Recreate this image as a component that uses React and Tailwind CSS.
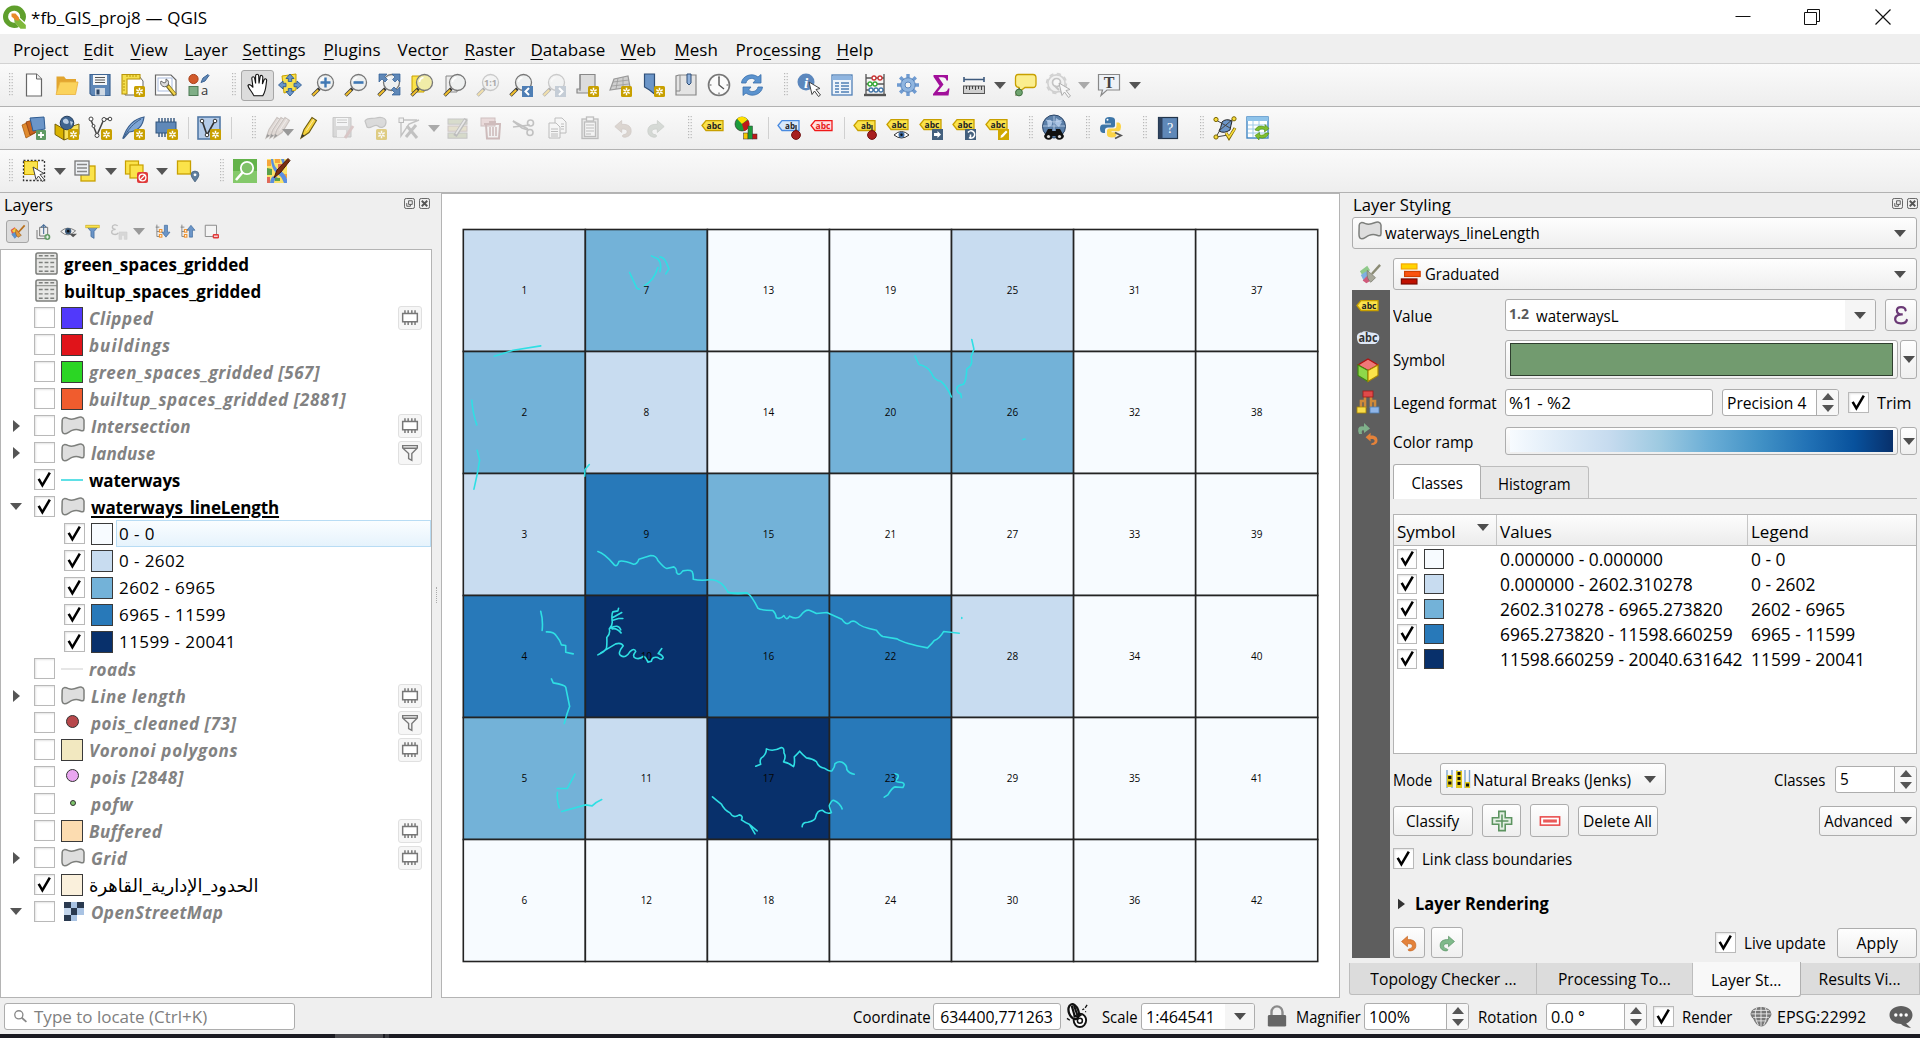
import React from "react";

const Star = ({ x = 13, y = 13 }) => (
  <g transform={`translate(${x} ${y})`}>
    <rect x="0" y="0" width="11" height="11" rx="1.5" fill="#c8a000" />
    <path d="M5.5 1.8V9.2M2.3 3.7L8.7 7.3M8.7 3.7L2.3 7.3" stroke="#fff" strokeWidth="1.5" />
    <circle cx="5.5" cy="5.5" r="1" fill="#c8a000" />
  </g>
);
const Glass = ({ fill = "#eef0f0", faded }) => (
  <g opacity={faded ? 0.35 : 1}>
    <path d="M8.5 15.5L1.5 22.5" stroke="#3a3a3a" strokeWidth="3.4" />
    <path d="M7.2 17L1.8 22.3" stroke="#f2c02c" strokeWidth="2" />
    <circle cx="14.5" cy="9.5" r="8" fill={fill} stroke="#777" strokeWidth="1.3" />
    <path d="M9.5 9a5 5 0 0 1 4-4.5" stroke="#fff" strokeWidth="1.6" fill="none" />
  </g>
);
const Tag = ({ fill = "#fbe34a", edge = "#c8a000", text = "abc", ink = "#222", y = 2 }) => (
  <g>
    <path d={`M1 ${y + 5.5}L5 ${y + 0.7}H22V${y + 10.5}H5Z`} fill={fill} stroke={edge} strokeWidth="1.3" />
    <text x="13" y={y + 8.6} fontSize="9" fontWeight="700" textAnchor="middle" fill={ink} fontFamily="Open Sans, sans-serif" textLength={text.length > 2 ? 15 : 10} lengthAdjust="spacingAndGlyphs">{text}</text>
  </g>
);
const Cursor = ({ x = 0, y = 0, o = 1 }) => (
  <path opacity={o} transform={`translate(${x} ${y})`} d="M0 0L11 6.5L7 7.5L11.5 13L9.5 14.5L5.5 9L3 12.5Z" fill="#fff" stroke="#444" strokeWidth="1" />
);
const Pencil = ({ x = 0, a = "#f4d13a", b = "#6b5b10" }) => (
  <g transform={`translate(${x} 0)`}>
    <path d="M4 22L7 13.5L15 1.5L19.5 4.5L12 16.5Z" fill={a} stroke={b} strokeWidth="1.1" />
    <path d="M4 22L5.3 18L7.5 19.6Z" fill="#333" />
    <path d="M9.5 14.5L17 3" stroke="#fff" strokeWidth="1" opacity=".6" />
  </g>
);
const Poly = () => (
  <path d="M1.2 6C1.6 3 4 3.2 7.5 4.6S13.5 5 16.5 3.8S22.6 2.8 23 6V14.5C23 17.5 21 17 19 16.2S15 14.6 11 16.4S5.5 20.4 3 19.6S1 16.5 1 13Z" fill="#dedede" stroke="#7d7f7c" strokeWidth="1.5" />
);
const UndoPath = "M1 10L9 3V7.5C17 7 21 10.5 20 17C19.5 20 17 22 13.5 22.5C9 23 9 20 12 19.5C15.5 19 16 16 15 14.5C14 13 12 13 9 13V17Z";

const ICONS = {
  new: <><path d="M4.5 1H14.5L19.5 6V23H4.5Z" fill="#fff" stroke="#666" strokeWidth="1.2" /><path d="M14.5 1V6H19.5" fill="#eee" stroke="#666" /></>,
  open: <><path d="M1.5 20V3.5H9L11 6H21V20Z" fill="#e2a52f" /><path d="M1 21.5L5 9H23L20.5 21.5Z" fill="#fbd35c" stroke="#eab13b" strokeWidth=".8" /></>,
  save: <><path d="M2 1.5H22V22.5H4L2 20.5Z" fill="#5f88b8" stroke="#3f6593" strokeWidth="1.2" /><rect x="5" y="2" width="14" height="10" fill="#f4f6f8" /><path d="M7 4.5H17M7 7H17M7 9.5H17" stroke="#555" /><rect x="7" y="15" width="10" height="7.5" fill="#cfd9e4" /><rect x="8.5" y="16.5" width="3" height="5" fill="#2f4868" /></>,
  layout: <><path d="M4 3H18L22 8V22H4Z" fill="#fff" stroke="#666" /><path d="M1 1.5H19V6H6V21H1Z" fill="#f5df4e" stroke="#b9960a" strokeWidth="1.1" /><path d="M6 2V4M9 2V4M12 2V4M15 2V4M2 8H4M2 11H4M2 14H4M2 17H4" stroke="#b9960a" /><Star /></>,
  layoutmgr: <><path d="M1.5 2H17L22 7V22H1.5Z" fill="#fff" stroke="#666" strokeWidth="1.2" /><rect x="4" y="5" width="14" height="13" fill="none" stroke="#a9bbdd" /><path d="M13 12L21 22" stroke="#6b5b10" strokeWidth="4" /><path d="M14 13L21 21.5" stroke="#f1d34b" strokeWidth="2.4" /><path d="M7 8a4 4 0 1 0 5-2v3l-2 1z" fill="#ddd" stroke="#666" /></>,
  style: <><circle cx="6.5" cy="6" r="4.6" fill="#d25a2b" stroke="#a8401a" /><rect x="2" y="13.5" width="9" height="9" fill="#7fae86" stroke="#4d7a55" /><path d="M14 9.5L16 5L21 1.5L22 2.5L18 8Z" fill="#5f88b8" stroke="#3f6593" /><text x="14" y="22" fontSize="13" fontFamily="Open Sans, sans-serif" fill="#333">a</text></>,
  hand: <path d="M7.5 22C5.5 18 1.5 14 2 12.3C3.2 10.8 5.5 12 7 14.5L5.8 5.2C6.2 3.2 8.2 3.4 8.6 5.2L9.6 10.5L9.6 2.8C9.9 .8 12.4 .8 12.7 2.8L13 10.5L14.2 3.4C14.7 1.8 16.9 2.2 16.8 4.2L16.4 11L18.2 6.5C19.2 5 21 6 20.6 7.8C19.8 12 20.4 17 16.8 22.8H8Z" fill="#fff" stroke="#111" strokeWidth="1.1" />,
  panto: <><path d="M4 3L18 1V17L6 20Z" fill="#f9e04a" stroke="#c8a000" /><path d="M12 1L16 5.5H13.7V8.5H10.3V5.5H8ZM23.5 12L19 16V13.7H16V10.3H19V8ZM12 23L8 18.5H10.3V15.5H13.7V18.5H16ZM.5 12L5 8V10.3H8V13.7H5V16Z" fill="#6b95c8" stroke="#2f5c92" strokeWidth=".9" /></>,
  zoomin: <><Glass /><path d="M14.5 4.5V14.5M9.5 9.5H19.5" stroke="#3f78b4" strokeWidth="2.4" /></>,
  zoomout: <><Glass /><path d="M9.5 9.5H19.5" stroke="#3f78b4" strokeWidth="2.6" /></>,
  zoomfull: <><Glass /><path d="M2 1H10L7.5 3.5L10.5 6.5L8 9L5 6L2 9ZM23 1V9L20.5 6.5L18 9L15.5 6.5L18 4L15 1ZM23 22H15L17.5 19.5L14.5 16.5L17 14L20 17L23 14Z" fill="#5f88b8" stroke="#2f5c92" strokeWidth=".7" /></>,
  zoomsel: <><path d="M2 3H14V19H2Z" fill="#fbe34a" stroke="#c8a000" /><Glass fill="#f1eca8" /></>,
  zoomlayer: <><path d="M3 3H14V19H3Z" fill="#eee" stroke="#888" /><Glass /></>,
  zoomnative: <><Glass faded /><text x="14.5" y="13" textAnchor="middle" fontSize="9" fontWeight="700" fill="#aaa" fontFamily="Open Sans, sans-serif">1:1</text></>,
  zoomlast: <><Glass /><rect x="13" y="13" width="11" height="11" fill="#4f7fb5" /><path d="M20 15L16.5 18.5L20 22" fill="none" stroke="#fff" strokeWidth="2" /></>,
  zoomnext: <><Glass faded /><rect x="13" y="13" width="11" height="11" fill="#c5cdd6" /><path d="M17 15L20.5 18.5L17 22" fill="none" stroke="#fff" strokeWidth="2" /></>,
  mapview: <><path d="M5 1.5H20V20H2V16H5Z" fill="#dcdcdc" stroke="#888" strokeWidth="1.2" /><path d="M5 1.5V18" stroke="#888" /><Star /></>,
  view3d: <><path d="M6 6L20 3L22 14L2 17Z" fill="#cfcfcf" stroke="#999" strokeWidth="1.2" /><path d="M10 5L8 16M15 4L15 15M5 9L21 7M4 13L21 11" stroke="#999" strokeWidth=".8" /><Star /></>,
  bookmark: <><path d="M3.5 1H13.5V21L8.5 17L3.5 14Z" fill="#6b95c8" stroke="#2f4f78" strokeWidth="1.2" /><Star /></>,
  bookmarks: <><path d="M5 2H22V19H22V22H2V3Z" fill="#e4e4e4" stroke="#888" strokeWidth="1.2" /><path d="M6 2V18H2" stroke="#888" fill="none" /><path d="M13 1H17V10L15 12L13 10Z" fill="#8fb1db" stroke="#2f4f78" /></>,
  clock: <><circle cx="12" cy="12" r="10.5" fill="#fbfbfb" stroke="#777" strokeWidth="1.6" /><path d="M12 4V12L17 16" fill="none" stroke="#555" strokeWidth="1.4" /><path d="M12 2.5V4.5M12 19.5V21.5M2.5 12H4.5M19.5 12H21.5" stroke="#555" /></>,
  refresh: <><path d="M1.5 10C2 3 12 -1 18 4L21 1.5V10H13L15.5 7C12 4 7 5.5 6 10Z" fill="#5b93cf" stroke="#3b70ab" strokeWidth=".8" /><path d="M22.5 14C22 21 12 25 6 20L3 22.5V14H11L8.5 17C12 20 17 18.5 18 14Z" fill="#5b93cf" stroke="#3b70ab" strokeWidth=".8" /></>,
  identify: <><circle cx="9" cy="9" r="8.5" fill="#5b87bd" /><text x="9" y="14.5" textAnchor="middle" fontSize="15" fontStyle="italic" fontWeight="700" fill="#fff" fontFamily="Liberation Serif, serif">i</text><Cursor x="12" y="9" /></>,
  table: <><rect x="2" y="2" width="20" height="20" fill="#eef4fb" stroke="#4f7fb5" strokeWidth="1.3" /><path d="M2 3H22V7H2Z" fill="#8fb5e0" /><path d="M5 10H9M11 10H19M5 13H9M11 13H19M5 16H9M11 16H19M5 19H9M11 19H19" stroke="#4f7fb5" strokeWidth="1.4" /></>,
  abacus: <><path d="M3 1V22M21 1V22M3 5H21M3 11H21M3 17H21" stroke="#555" strokeWidth="1.3" /><path d="M1 22H23" stroke="#555" strokeWidth="2.4" /><g fill="#fff" strokeWidth="1.3"><circle cx="11" cy="5" r="2" stroke="#c33" /><circle cx="17" cy="5" r="2" stroke="#c33" /><circle cx="7" cy="11" r="2" stroke="#3a3" /><circle cx="12" cy="11" r="2" stroke="#3a3" /><circle cx="8" cy="17" r="2" stroke="#47a" /><circle cx="13" cy="17" r="2" stroke="#47a" /><circle cx="18" cy="17" r="2" stroke="#47a" /></g></>,
  gear: <><g stroke="#6f9bd1" strokeWidth="3.4"><path d="M12 1V23M1 12H23M4.2 4.2L19.8 19.8M19.8 4.2L4.2 19.8" /></g><circle cx="12" cy="12" r="7.2" fill="#8fb5e0" stroke="#5b87bd" /><circle cx="12" cy="12" r="3" fill="#f2f2f2" stroke="#5b87bd" /></>,
  sigma: <path d="M4.5 2H19V7.5H17.5C17 5 16 4.3 13 4.3H9.5L14.5 11.5L8.5 19H14.5C17.5 19 18.5 17.5 19 15.5H20.5L19.5 22.5H4V21L10.5 12.8L4.5 3.8Z" fill="#a10f9a" />,
  measure: <><path d="M2 6.5H22M2 4V9M22 4V9" stroke="#3e5a7d" strokeWidth="1.6" /><rect x="1.5" y="13" width="21" height="7.5" fill="#cfcfcf" stroke="#555" /><path d="M4.5 13V16M7.5 13V17M10.5 13V16M13.5 13V17M16.5 13V16M19.5 13V17" stroke="#444" /></>,
  tips: <><path d="M5 1.5H20Q23 1.5 23 5V11Q23 14.5 20 14.5H12L6 19V14.5Q2.5 14 2.5 11V5Q2.5 1.5 5 1.5Z" fill="#fbee8e" stroke="#c8a000" strokeWidth="1.3" /><path d="M3 23V18L7 15" stroke="#6a6a3a" fill="none" /><circle cx="6" cy="19.5" r="3.4" fill="#6fa46f" stroke="#3f6f3f" /></>,
  action: <g opacity=".38"><circle cx="10.5" cy="10.5" r="8.6" fill="#ececec" stroke="#999" strokeWidth="1.6" /><circle cx="10.5" cy="10.5" r="9.8" fill="none" stroke="#999" strokeWidth="1.8" strokeDasharray="4.2 3.5" /><circle cx="10.5" cy="9.5" r="4" fill="#fff" stroke="#777" strokeWidth="1.7" /><path d="M9 13L13 17" stroke="#777" strokeWidth="2" /><Cursor x="13" y="10" /></g>,
  textann: <><path d="M1.5 1.5H22.5V17H10L4 22.5L5.5 17H1.5Z" fill="#eef2f7" stroke="#888" strokeWidth="1.2" /><text x="12" y="14.5" textAnchor="middle" fontSize="16" fontWeight="700" fill="#444" fontFamily="Liberation Serif, serif">T</text></>,
  addlayer: <><path d="M0 9L9 5L13 17L4 22Z" fill="#e08a2e" stroke="#a85c10" strokeWidth=".8" /><path d="M4 6L14 3L17 15L8 19Z" fill="#c9641c" stroke="#8a4010" strokeWidth=".8" /><path d="M8 2L22 1L23 13L11 15Z" fill="#6b95c8" stroke="#2f5c92" /><rect x="14" y="14" width="10" height="10" rx="1" fill="#5f9a63" /><path d="M19 16V22M16 19H22" stroke="#fff" strokeWidth="1.8" /></>,
  geopkg: <><path d="M0 8L9 13V24L0 18.5Z" fill="#d9b200" stroke="#6b5600" strokeWidth=".9" /><path d="M9 13L24 8V18.5L9 24Z" fill="#f7e15a" stroke="#6b5600" strokeWidth=".9" /><circle cx="12" cy="7" r="6.8" fill="#3f648f" stroke="#26405f" /><path d="M8 4Q11 1 13 4T12 8Q9 8 8 6ZM15 5L18 6L16 10Z" fill="#b9cde4" /><Star /></>,
  newshp: <><path d="M3 4L9 19L16 3H21" fill="none" stroke="#444" strokeWidth="1.5" /><g fill="#fff" stroke="#444"><circle cx="3" cy="3" r="2" /><circle cx="9" cy="19.5" r="2" /><circle cx="16" cy="3.5" r="2" /><circle cx="22" cy="3" r="1.8" /><circle cx="5.5" cy="10" r="1.5" /></g><Star /></>,
  feather: <><path d="M2 22C6 10 12 3 23 1C22 9 18 15 8 16L3 22Z" fill="#7fa6d6" stroke="#3b5f8c" strokeWidth="1.2" /><path d="M2 23C7 13 13 7 20 3" fill="none" stroke="#3b5f8c" /><Star /></>,
  memory: <><rect x="2" y="6" width="20" height="11" fill="#5f88b8" stroke="#31547d" /><path d="M5 2V6M8 2V6M11 2V6M14 2V6M17 2V6M20 2V6M5 17V21M8 17V21M11 17V21M14 17V21" stroke="#31547d" strokeWidth="1.4" /><Star /></>,
  virtual: <><rect x="1" y="1" width="22" height="22" fill="#b4cbe8" stroke="#5278a5" strokeWidth="1.6" /><path d="M5 4.5L10 19L18 4.5" fill="none" stroke="#333" strokeWidth="1.6" /><g fill="#fff" stroke="#333"><circle cx="5" cy="5" r="1.8" /><circle cx="10" cy="19" r="1.8" /><circle cx="18" cy="5" r="1.8" /></g><Star /></>,
  pencils: <g opacity=".45"><Pencil x={-4} a="#cbbcb4" b="#93857e" /><Pencil x={0} a="#cbbcb4" b="#93857e" /><Pencil x={4} a="#cbbcb4" b="#93857e" /></g>,
  pencil: <Pencil x={-1} />,
  saveedit: <g opacity=".35"><path d="M2 1.5H20V21H2Z" fill="#aaa" stroke="#777" /><rect x="5" y="2" width="12" height="8" fill="#f4f6f8" /><path d="M6 4H16M6 6.5H16" stroke="#777" /><rect x="6" y="14" width="9" height="7" fill="#eee" /><path d="M14 22L22 10" stroke="#a77" strokeWidth="3" /></g>,
  addpoly: <g opacity=".45"><path d="M1 5C3 1 8 3 12 2S22 1 22 6S17 13 14 10S6 14 3 11Z" fill="#bbb" stroke="#888" strokeWidth="1.2" /><Star x={12} y={13} /></g>,
  vertex: <g opacity=".45"><path d="M4 4V20L12 8L22 4M4 4H20" fill="none" stroke="#888" strokeWidth="1.4" /><rect x="2" y="2" width="4.5" height="4.5" fill="#eee" stroke="#777" /><path d="M9 21L19 9M10 10L20 22" stroke="#888" strokeWidth="3" /></g>,
  modify: <g opacity=".5"><rect x="2" y="3" width="19" height="5.2" fill="#bcc4a4" stroke="#999" /><rect x="2" y="10" width="19" height="5.2" fill="#d6cda8" stroke="#a99" /><rect x="2" y="17" width="19" height="5.2" fill="#bcc4a4" stroke="#999" /><path d="M9 20L20 3" stroke="#888" strokeWidth="4" /><path d="M10 18L19 4" stroke="#ddd" strokeWidth="1.6" /></g>,
  delete: <g opacity=".42"><rect x="2" y="2" width="14" height="8" fill="#d9b5b5" stroke="#977" /><path d="M5 8H22M7 9L8 22.5H20L21 9M10 6H17" fill="none" stroke="#9c7070" strokeWidth="2" /><path d="M11 11V20M14 11V20M17 11V20" stroke="#9c7070" strokeWidth="1.6" /></g>,
  cut: <g opacity=".4" fill="none" stroke="#777" strokeWidth="1.6"><path d="M1 5L16 13M1 11L18 9" /><circle cx="18.5" cy="7" r="3" /><circle cx="18" cy="16.5" r="3" /><path d="M1 5L10 12L16 14" /></g>,
  copy: <g opacity=".5" fill="#f7f7f7" stroke="#888"><path d="M10 2H17L21 6V17H10Z" /><path d="M4 7H11L15 11V22H4Z" /><path d="M6 13H13M6 15.5H13M6 18H13M6 20H13M16 8H19M16 10.5H19M16 13H19" /></g>,
  paste: <g opacity=".5" fill="#f4f4f4" stroke="#888" strokeWidth="1.3"><rect x="4" y="3" width="16" height="19.5" fill="#ddd" /><rect x="6.5" y="6" width="11" height="14.5" /><rect x="8.5" y="1" width="7" height="4" /><path d="M8 9H16M8 12H16M8 15H16M8 18H13" strokeWidth="1" /></g>,
  undo: <path opacity=".4" transform="translate(3 2) scale(.85)" d={UndoPath} fill="#b8a89c" stroke="#a09088" />,
  redo: <path opacity=".4" transform="translate(21 2) scale(-.85 .85)" d={UndoPath} fill="#a9b3a9" stroke="#909a90" />,
  abc: <Tag y={4} />,
  diagram: <><circle cx="8" cy="8" r="7" fill="#1c9b3c" stroke="#222" strokeWidth=".6" /><path d="M8 8L3 2.8A7 7 0 0 1 13.5 3.5Z" fill="#ffe000" /><path d="M8 8L14 4A7 7 0 0 1 10 15Z" fill="#c01818" /><rect x="9.5" y="17" width="4.5" height="6" fill="#f5c800" stroke="#333" strokeWidth=".5" /><rect x="14" y="10" width="4.5" height="13" fill="#1c9b3c" stroke="#333" strokeWidth=".5" /><rect x="18.5" y="18" width="4.5" height="5" fill="#c01818" stroke="#333" strokeWidth=".5" /></>,
  abpinblue: <><Tag y={4} fill="#d8e8fb" edge="#4a8be0" text="ab" /><path d="M19 9V18" stroke="#333" strokeWidth="1.4" /><circle cx="19" cy="19" r="4.4" fill="#a81f1f" stroke="#701010" /></>,
  abcred: <Tag y={4} fill="#ffe0e0" edge="#f01818" ink="#e81818" />,
  abpin: <><Tag y={4} text="ab" /><path d="M19 9V18" stroke="#333" strokeWidth="1.4" /><circle cx="19" cy="19" r="4.4" fill="#a81f1f" stroke="#701010" /></>,
  abceye: <><Tag y={3} /><path d="M8 19Q15.5 12 23 19Q15.5 25 8 19Z" fill="#fff" stroke="#333" /><circle cx="15.5" cy="18.8" r="3" fill="#3f6ea5" /><circle cx="15.5" cy="18.8" r="1.2" fill="#111" /></>,
  abcmove: <><Tag y={3} /><rect x="13" y="13" width="11" height="11" fill="#44607d" /><path d="M15 17H18.5V15L22 18.5L18.5 22V20H15Z" fill="#fff" /></>,
  abcrot: <><Tag y={3} /><rect x="13" y="13" width="11" height="11" fill="#44607d" /><path d="M16 16.5A3.6 3.6 0 1 1 17 21.5M18.5 18.5V22" fill="none" stroke="#fff" strokeWidth="1.6" /></>,
  abcedit: <><Tag y={3} /><rect x="13" y="13" width="11" height="11" fill="#d0a800" /><path d="M15.5 22L16 19.5L21 14.5L22.5 16L18 21Z" fill="#fff" /></>,
  metasearch: <><circle cx="12" cy="10.5" r="11.5" fill="#5b7fa8" stroke="#2c4668" /><path d="M5 5Q9 2 10 6T6 11ZM14 2L20 6L17 11L13 8Z" fill="#a9c3e3" /><path d="M1 10H23M12 0V20M4 4Q12 8 20 4" stroke="#c0d4ec" strokeWidth=".8" /><path d="M6 13H10V15H14V13H18L22 20Q21 24 17 23.8Q13.5 23.5 13.5 20H10.5Q10.5 23.5 7 23.8Q3 24 2 20Z" fill="#111" /><circle cx="6.5" cy="20.5" r="1.6" fill="#ddd" /><circle cx="17.5" cy="20.5" r="1.6" fill="#ddd" /></>,
  python: <><path d="M10.5 1Q5.5 1 6 5V7.5H12V8.5H4Q1 8.5 1 12.5T4 17H6V14Q6 11.5 9 11.5H14Q16 11.5 16 9.5V4Q16 1 10.5 1Z" fill="#3d76a8" /><path d="M13 21.5Q8 21.5 8 18.5V15Q8 12.5 10.5 12.5H15.5Q17.5 12.5 17.5 10V6.5H19.5Q22 7 22 11Q22 14 20 15.2H12.5V16.2H17.5V18.5Q17.5 21.5 13 21.5Z" fill="#fbd345" /><circle cx="8.5" cy="3.8" r="1" fill="#fff" /><path d="M16 16.5L22 19.5L16 22.5" fill="none" stroke="#555" strokeWidth="1.8" /></>,
  help: <><rect x="2.5" y="1.5" width="19" height="21" fill="#5f88b8" stroke="#22344a" strokeWidth="1.2" /><rect x="2.5" y="1.5" width="4" height="21" fill="#2f4360" /><text x="14" y="17" textAnchor="middle" fontSize="14" fill="#fff" fontFamily="Liberation Serif, serif">?</text></>,
  topo: <><path d="M9 6Q13 2 19 5Q18 9 17 14Q11 18 6 15Q8 12 9 6Z" fill="#6b95c8" stroke="#222" strokeWidth="1" /><path d="M3 4L17 12M20 3L7 14L3 21L15 19" stroke="#444" fill="none" /><g fill="#f8dc3c" stroke="#7a6500"><circle cx="3" cy="3.5" r="2.1" /><circle cx="21" cy="2.8" r="2.1" /><circle cx="3" cy="21" r="2.1" /></g><path d="M13 17L16 22L22 12" fill="none" stroke="#7a6500" strokeWidth="3" /><path d="M13 17L16 21.5L22 12.5" fill="none" stroke="#f8dc3c" strokeWidth="1.6" /></>,
  sheet: <><rect x="1" y="1" width="21" height="21" fill="#fff" stroke="#3f86c4" strokeWidth="1.4" /><rect x="1" y="1" width="21" height="4" fill="#8ec3ea" /><path d="M2 9H21M2 13H21M2 17H21M7 5V21M13 5V21" stroke="#9ecbe8" /><path d="M9 14Q12 8 19 11V8.5L23 12.5L18.5 16V13.5Q14 12 12.5 15ZM23 17Q20 24 13 21.5V24L9 19.5L13.5 16.5V18.8Q18 20 19.5 17Z" fill="#7fbf2f" stroke="#4a8a10" strokeWidth=".6" /></>,
  select: <><rect x="1.5" y="1.5" width="21" height="20" fill="none" stroke="#333" strokeWidth="1.3" strokeDasharray="2 1.6" /><rect x="2.5" y="2.5" width="13" height="13" fill="#fbe34a" stroke="#c8a000" /><Cursor x="11" y="8" /></>,
  form: <><rect x="8" y="7" width="14" height="15" fill="#fbe34a" stroke="#c8a000" strokeWidth="1.3" /><rect x="2" y="2" width="14" height="14" fill="#eef1f5" stroke="#777" strokeWidth="1.3" /><path d="M4 5.5H14M4 9H14M4 12.5H14" stroke="#888" strokeWidth="1.6" /></>,
  deselect: <><rect x="1.5" y="2" width="13" height="13" fill="#fbe34a" stroke="#c8a000" strokeWidth="1.2" /><rect x="6" y="6" width="13" height="13" fill="#fbe34a" stroke="#c8a000" strokeWidth="1.2" /><rect x="13" y="13" width="11" height="11" rx="2" fill="#e03a3a" /><circle cx="18.5" cy="18.5" r="3.4" fill="none" stroke="#fff" strokeWidth="1.3" /><path d="M16 21L21 16" stroke="#fff" strokeWidth="1.2" /></>,
  selloc: <><rect x="2.5" y="2" width="13" height="13" fill="#fbe34a" stroke="#c8a000" strokeWidth="1.3" /><path d="M20 23Q16 18 16 16A4 4 0 0 1 24 16Q24 18 20 23Z" fill="#5f7f9f" stroke="#3c566f" strokeWidth=".6" /><circle cx="20" cy="15.8" r="1.4" fill="#fff" /></>,
  green: <><rect x="0" y="0" width="24" height="24" fill="#63b34a" /><rect x="0" y="12" width="24" height="12" fill="#84c96a" /><circle cx="14" cy="9" r="6.2" fill="#7fc168" stroke="#fff" strokeWidth="1.8" /><path d="M9.5 13.5L3 21" stroke="#fff" strokeWidth="2.6" /></>,
  osm: <><rect x="1" y="0" width="20" height="24" fill="#fbe36a" /><path d="M1 1H5V7H1ZM9 0H14V4H9ZM16 15H21V19H16Z" fill="#f6a53a" /><path d="M7 0Q8 9 13 11T21 20V24H18Q15 16 10 14Q5 8 5 0ZM4 24Q5 16 9 17L12 19Q8 20 8 24ZM15 0H18L20 8L17 6Z" fill="#5b8fe0" /><path d="M1 9L6 10V16H1ZM9 19H14V22H9Z" fill="#5aa04a" /><path d="M1 18H4V24H1ZM12 5H16V9H12Z" fill="#e06a5a" /><path d="M22 -.5L24 1.5L15 13L8 19L11 11Z" fill="#7a2f10" stroke="#4a1a05" strokeWidth="1" /></>,
  brush: <><path d="M1 9L7 5L14 12L8 21Q5 17 4 18Z" fill="#e05a4a" /><path d="M3 10L8 6L12 11L6 13Z" fill="#f0d040" /><path d="M2 15L8 12L12 17L7 22Z" fill="#5b93cf" /><path d="M9 8L17 17L12 20Q7 16 9 8Z" fill="#e4993a" stroke="#8a4f10" strokeWidth=".8" /><path d="M13 12L22 2" stroke="#b8701c" strokeWidth="2.6" /></>,
  brush2: <><path d="M1 9L9 3L12 8L4 14Z" fill="#8fc98a" /><path d="M2 13L8 9L11 14L5 19Z" fill="#7fb0e0" /><path d="M4 19L9 14L13 19L8 22Z" fill="#d05a7a" /><path d="M9 8L18 16L13 21Q8 18 9 8Z" fill="#a8a89a" stroke="#77776a" strokeWidth=".8" /><path d="M14 12L23 2" stroke="#8b8b74" strokeWidth="2.6" /></>,
  addgroup: <><path d="M3 9V22H15M7 5V18H19V5Z" fill="none" stroke="#777" strokeWidth="1.5" /><path d="M13 1V15M9 5L13 1L17 5" stroke="#456c98" fill="none" strokeWidth="1.6" /><circle cx="18.5" cy="19.5" r="4.5" fill="#5f9a63" /><path d="M18.5 17V22M16 19.5H21" stroke="#fff" strokeWidth="1.4" /></>,
  eye: <><path d="M1 12Q10 3 22 11Q11 22 1 12Z" fill="#eee" stroke="#777" strokeWidth="1.3" /><circle cx="11.5" cy="11.5" r="4.4" fill="#3a5878" /><circle cx="11.5" cy="11.5" r="1.8" fill="#111" /><path d="M13 15H24L18.5 20Z" fill="#555" /></>,
  filter: <><path d="M2 3H22L14.5 12V23L9.5 20V12Z" fill="#6b95c8" stroke="#3b6597" strokeWidth="1.1" /><path d="M1 2H23V6H1Z" fill="#fbe34a" stroke="#c8a000" strokeWidth=".8" /></>,
  epsfilter: <g opacity=".45"><path d="M10 3C8 0 2 1 2 4.5C2 7 5 8 7 8C4 8 1 9.5 1 12.5C1 16 8 17 11 13.5" fill="none" stroke="#888" strokeWidth="2" /><path d="M12 12H24V23H20V17H16V23H12Z" fill="#bbb" stroke="#aaa" /></g>,
  expand: <><path d="M3 1V20H8M1 5H7M3 12H8" fill="none" stroke="#777" strokeWidth="1.3" /><g fill="#fff" stroke="#f08a1c" strokeWidth="1.6"><rect x="7" y="9" width="4" height="4" /><rect x="7" y="17" width="4" height="4" /></g><path d="M15 2H20V13H24L17.5 21L11 13H15Z" fill="#6b95c8" stroke="#2f5c92" strokeWidth=".9" /></>,
  collapse: <><path d="M3 1V20H8M1 5H7M3 12H8" fill="none" stroke="#777" strokeWidth="1.3" /><g fill="#fff" stroke="#f08a1c" strokeWidth="1.6"><rect x="7" y="9" width="4" height="4" /><rect x="7" y="17" width="4" height="4" /></g><path d="M15 21H20V10H24L17.5 2L11 10H15Z" fill="#6b95c8" stroke="#2f5c92" strokeWidth=".9" /></>,
  remove: <><path d="M2 2H20V20H2Z" fill="#f4f4f4" stroke="#888" strokeWidth="1.5" /><rect x="14" y="16" width="10" height="7" rx="2" fill="#e03a3a" /><path d="M16 19.5H22" stroke="#fff" strokeWidth="1.8" /></>,
  poly: <Poly />,
  tableg: <><rect x="1" y="1" width="22" height="22" rx="2" fill="#e8e8e6" stroke="#7d7f7c" strokeWidth="1.6" /><path d="M1 7H23" stroke="#7d7f7c" /><path d="M4 4H8M10 4H14M16 4H20M4 11H8M10 11H14M16 11H20M4 15.5H8M10 15.5H14M16 15.5H20M4 20H8M10 20H14M16 20H20" stroke="#7d7f7c" strokeWidth="1.5" /></>,
  graduated: <><rect x="1.5" y="1" width="17" height="5.5" fill="#ffd400" stroke="#f5a800" strokeWidth="1.3" /><rect x="5" y="9.2" width="17" height="5.5" fill="#fb5310" stroke="#d04000" strokeWidth="1.3" /><rect x="1.5" y="17.4" width="17" height="5.5" fill="#c01000" stroke="#7a0a00" strokeWidth="1.3" /></>,
  cloud: <><path d="M1 12C.5 8 3 6.5 6 6.5Q7 4.5 11 5.5T19 7Q23.5 8 23.3 12T19 18H5Q1 17.5 1 12Z" fill="#dfe8f6" /><text x="12" y="15.6" fontSize="12" fontWeight="700" textAnchor="middle" fill="#333" textLength="19" lengthAdjust="spacingAndGlyphs" fontFamily="Open Sans, sans-serif">abc</text></>,
  cube: <><path d="M12 1L22 7L12 12.5L2 7Z" fill="#f07878" stroke="#b01010" strokeWidth="1.2" /><path d="M2 7L12 12.5V23.5L2 17.5Z" fill="#8ed84a" stroke="#3f8a10" strokeWidth="1.2" /><path d="M22 7L12 12.5V23.5L22 17.5Z" fill="#fbe34a" stroke="#a88600" strokeWidth="1.2" /></>,
  tree: <><path d="M5 20V11H9M19 20V11H15M9 5V18M15 5V18" stroke="#d08a3a" strokeWidth="2.6" fill="none" /><rect x="7" y="1" width="10" height="6" fill="#e04a4a" stroke="#a01818" strokeWidth=".8" /><rect x="1" y="17" width="9" height="6" fill="#f8dc4a" stroke="#a88600" strokeWidth=".8" /><rect x="14" y="17" width="9" height="6" fill="#8fb5e8" stroke="#4f7fb5" strokeWidth=".8" /></>,
  history: <><path d="M3 12Q0 3 8 4.5V1L14 6.5L8 11V8.5Q5 7 6 12Z" fill="#7fb08a" /><path transform="translate(9 9) scale(.62)" d={UndoPath} fill="#e4823a" /></>,
  undoO: <path transform="translate(1 0)" d={UndoPath} fill="#e4823a" stroke="#c0601c" strokeWidth=".8" />,
  redoG: <path transform="translate(23 0) scale(-1 1)" d={UndoPath} fill="#7fb98a" stroke="#4f8a5a" strokeWidth=".8" />,
  plus: <path d="M8.5 1.5H15.5V8.5H22.5V15.5H15.5V22.5H8.5V15.5H1.5V8.5H8.5ZM12 5V19M5 12H19" fill="#e4efe4" stroke="#5c9460" strokeWidth="1.7" />,
  minus: <><rect x="1.5" y="7.5" width="21" height="9" fill="#fff" stroke="#e84a4a" strokeWidth="1.7" /><path d="M4.5 12H19.5" stroke="#ea5a5a" strokeWidth="3.4" /></>,
  jenks: <><path d="M1 3V21M6 3V21M11 3V21M15 3V21M19 3V21M23.5 3V21" stroke="#7fa6cf" strokeWidth="1.4" /><path d="M1 8H6.5V20H1ZM10 4H16V21H10ZM19 15H24V21H19Z" fill="#e0c818" /><path d="M2.2 9H5.4V12H2.2ZM2.2 14.5H5.4V17.5H2.2ZM11.5 5H14.5V8H11.5ZM11.5 10H14.5V13H11.5ZM11.5 15H14.5V18H11.5ZM20 16.5H23V19.5H20Z" fill="#111" /></>,
  chip: <path d="M4 7H20V16H4ZM6.5 3.5V7M10 3.5V7M14 3.5V7M17.5 3.5V7M6.5 16V19.5M10 16V19.5M14 16V19.5M17.5 16V19.5" fill="#fff" stroke="#777" strokeWidth="1.6" />,
  funnel: <path d="M4 4H20V6.5L14 12.5V20L10.5 18V12.5L4 6.5ZM4 6.8H20" fill="#f4f4f4" stroke="#777" strokeWidth="1.5" />,
  mouse: <><ellipse cx="14.5" cy="17" rx="6.5" ry="7" fill="#fff" stroke="#111" strokeWidth="2" /><ellipse cx="8" cy="8" rx="5" ry="8" transform="rotate(-20 8 8)" fill="#fff" stroke="#111" strokeWidth="2.4" /><path d="M6 2L9.5 14M8.5 2L12 12" stroke="#111" strokeWidth="2.2" /><path d="M8 12Q13 14 16 11" stroke="#111" strokeWidth="2.2" /><circle cx="14.5" cy="17.5" r="2.6" fill="#fff" stroke="#111" strokeWidth="1.6" /><path d="M1 15L4 17M17 6L19 5M20 4L22 1M20 8L21 8" stroke="#111" strokeWidth="1.4" /></>,
  lock: <><path d="M6 11V7.5A6 6 0 0 1 18 7.5V11" fill="none" stroke="#8a8a8a" strokeWidth="2.6" /><rect x="2" y="11" width="20" height="12.5" rx="1.5" fill="#666" /></>,
  globe: <><path d="M5 6Q12 -4 19 6Z" fill="#666" /><ellipse cx="12" cy="9" rx="12" ry="8" fill="#777" /><path d="M2 12Q6 23 12 23.5T22 12Z" fill="#777" /><path d="M1 9H23M3 5H21M3 13H21M6 17H18M12 1V23M7 2Q3 11 9 22M17 2Q21 11 15 22" stroke="#eee" strokeWidth="1" fill="none" /></>,
  chat: <><path d="M12 2C18 2 23.5 5.5 23.5 11S18 19.5 17 19.5L22 24Q15 23 12 20C6 20 .5 16.5 .5 11S6 2 12 2Z" fill="#5e5e5e" /><circle cx="6.8" cy="11" r="1.7" fill="#fff" /><circle cx="12" cy="11" r="1.7" fill="#fff" /><circle cx="17.2" cy="11" r="1.7" fill="#fff" /></>,
  search: <><circle cx="10" cy="10" r="7" fill="none" stroke="#888" strokeWidth="2.2" /><path d="M15 15L23 22" stroke="#888" strokeWidth="3" /></>,
  epsilon: <path d="M17.5 6.5C17 1.5 7.5 1 7 6.5C6.8 10.5 11 11.5 14 11.2C10 11 5 12.5 5 17C5.2 23.5 18 23.5 19 18" fill="none" stroke="#6b3a76" strokeWidth="2.7" strokeLinecap="round" />,
};

const Icon = ({ n, s = "size-6" }) => (
  <svg viewBox="0 0 24 24" className={`${s} shrink-0 overflow-visible`} fill="none">{ICONS[n]}</svg>
);

const Down = ({ c = "text-[#4e4e4e]" }) => (
  <svg viewBox="0 0 12 7" className={`h-[7px] w-3 shrink-0 ${c}`}><path d="M0 0H12L6 7Z" fill="currentColor" /></svg>
);

/* Condensed label: left-anchored by default, centred with `mid`, right-anchored with `end`. */
const N = ({ children, mid, end, k = "scale-x-90", c = "" }) => (
  <span className={`inline-block whitespace-nowrap ${mid ? "origin-center" : end ? "origin-right" : "origin-left"} ${k} ${c}`}>{children}</span>
);

const Grip = () => (
  <svg viewBox="0 0 4 24" className="h-6 w-1 shrink-0" fill="#b8b8b8">
    {Array.from({ length: 8 }, (_, i) => (
      <g key={i}><rect x="0" y={i * 3} width="1.2" height="1.2" /><rect x="2.6" y={i * 3} width="1.2" height="1.2" /></g>
    ))}
  </svg>
);

const SLOT = { h: "w-6", H: "w-[25px]", s0: "w-[18px]", J: "w-[25px]" };

function Toolbar({ items }) {
  return (
    <div className="box-content flex h-[42px] shrink-0 items-center border-b border-[#b2b2b2] bg-linear-to-b from-[#fafafa] to-[#eeeeee] pb-0">
      {items.split(" ").map((it, i) => {
        if (SLOT[it]) return <div key={i} className={`flex shrink-0 justify-end pr-[5px] ${SLOT[it]}`}><Grip /></div>;
        if (it === "|") return <div key={i} className="flex w-2.5 shrink-0 justify-center"><div className="h-[22px] w-px bg-[#d0d0d0]" /></div>;
        if (it === "v" || it === "vg" || it === "v16") return <div key={i} className={`flex shrink-0 justify-center ${it === "v16" ? "w-4" : "w-[18px]"}`}><Down c={it === "v" ? "text-[#555]" : "text-[#aaa]"} /></div>;
        if (it === "hand") return <div key={i} className="flex h-[31px] w-[33px] shrink-0 items-center justify-center rounded-[3px] border border-[#a6a6a6] bg-[#dcdcdc]"><Icon n="hand" /></div>;
        if (it === "pencils") return <div key={i} className="relative flex w-[33px] shrink-0 justify-center"><Icon n="pencils" /><div className="absolute right-0 bottom-1"><Down c="text-[#999]" /></div></div>;
        return <div key={i} className="flex w-[33px] shrink-0 justify-center pr-px"><Icon n={it} /></div>;
      })}
    </div>
  );
}

const MENU = [
  ["Pro", "j", "ect", "w-[70.5px]"], ["", "E", "dit", "w-[47px]"], ["", "V", "iew", "w-[54px]"], ["", "L", "ayer", "w-[58px]"],
  ["", "S", "ettings", "w-[81px]"], ["", "P", "lugins", "w-[74px]"], ["Vect", "o", "r", "w-[67px]"], ["", "R", "aster", "w-[66px]"],
  ["", "D", "atabase", "w-[90px]"], ["", "W", "eb", "w-[54px]"], ["", "M", "esh", "w-[61px]"], ["Pro", "c", "essing", "w-[101px]"], ["", "H", "elp", "w-[60px]"],
];

const Box = ({ on, small }) => (
  <div className={`flex shrink-0 items-center justify-center border border-[#b9b9b9] bg-white shadow-[inset_1px_1px_2px_#e4e4e4] ${small ? "size-[20px]" : "size-[21px]"}`}>
    {on && <svg viewBox="0 0 16 16" className="size-[17px]"><path d="M2.5 7.5L6 13.5L13 1.5" fill="none" stroke="#000" strokeWidth="2.4" /></svg>}
  </div>
);

const Swatch = ({ c, s = "size-[22px]" }) => <div className={`shrink-0 border border-[#3a3a3a] ${c} ${s}`} />;

const LAYERS = [
  { t: "green_spaces_gridded", k: "table", tr: "tracking-[.05px]" },
  { t: "builtup_spaces_gridded", k: "table" },
  { t: "Clipped", sw: "bg-[#5139fb]", ind: "chip", tr: "tracking-[.6px]" },
  { t: "buildings", sw: "bg-[#e0141a]", tr: "tracking-[1px]" },
  { t: "green_spaces_gridded [567]", sw: "bg-[#2bd624]", tr: "tracking-[.5px]" },
  { t: "builtup_spaces_gridded [2881]", sw: "bg-[#f05c2e]", tr: "tracking-[.6px]" },
  { t: "Intersection", k: "poly", ex: "r", ind: "chip", tr: "tracking-[.2px]" },
  { t: "landuse", k: "poly", ex: "r", ind: "funnel", tr: "tracking-[.15px]" },
  { t: "waterways", k: "line", line: "bg-[#5fe0e6]", on: 1, tr: "tracking-[-.2px]" },
  { t: "waterways_lineLength", k: "poly", ex: "d", on: 1, u: 1, tr: "tracking-[-.12px]" },
  { t: "0 - 0", sw: "bg-[#f7fbff]", child: 1, hi: 1 },
  { t: "0 - 2602", sw: "bg-[#c8dcf0]", child: 1 },
  { t: "2602 - 6965", sw: "bg-[#73b2d8]", child: 1 },
  { t: "6965 - 11599", sw: "bg-[#2879b9]", child: 1 },
  { t: "11599 - 20041", sw: "bg-[#08306b]", child: 1 },
  { t: "roads", k: "line", line: "bg-[#e6e6e6]", tr: "tracking-[.4px]" },
  { t: "Line length", k: "poly", ex: "r", ind: "chip", tr: "tracking-[.55px]" },
  { t: "pois_cleaned [73]", k: "dot", dot: "size-[13px] bg-[#b7484b]", ind: "funnel", tr: "tracking-[.5px]" },
  { t: "Voronoi polygons", sw: "bg-[#f2e8c0]", ind: "chip", tr: "tracking-[.7px]" },
  { t: "pois [2848]", k: "dot", dot: "size-[13px] bg-[#e9a6f0]", tr: "tracking-[.6px]" },
  { t: "pofw", k: "dot", dot: "size-[6px] bg-[#7fc46c]", tr: "tracking-[.6px]" },
  { t: "Buffered", sw: "bg-[#fcdcb0]", ind: "chip", tr: "tracking-[.45px]" },
  { t: "Grid", k: "poly", ex: "r", ind: "chip", tr: "tracking-[.6px]" },
  { t: "الحدود_الإدارية_القاهرة", sw: "bg-[#faf0dc]", on: 1, ar: 1 },
  { t: "OpenStreetMap", k: "osm", ex: "d", tr: "tracking-[.45px]" },
];

function LayerRow({ r }) {
  const active = r.on || r.k === "table";
  if (r.child)
    return (
      <div className="flex h-[27px] items-center pl-[63px]">
        <Box on />
        <Swatch c={`ml-1.5 ${r.sw}`} />
        <div className={`ml-[3px] flex h-[27px] flex-1 items-center border pl-0.5 tracking-[.42px] ${r.hi ? "border-[#b8dcf4] bg-linear-to-b from-[#fafdff] to-[#e6f3fc]" : "border-transparent"}`}><span className="pt-px">{r.t}</span></div>
      </div>
    );
  return (
    <div className="flex h-[27px] items-center">
      <div className="flex w-[33px] shrink-0 items-center pl-[9px]">
        {r.ex === "r" && <svg viewBox="0 0 7 12" className="ml-[3px] h-3 w-[7px]"><path d="M0 0L7 6L0 12Z" fill="#555" /></svg>}
        {r.ex === "d" && <Down c="text-[#555]" />}
      </div>
      {r.k === "table" ? (
        <div className="flex w-[30px] pl-px"><Icon n="tableg" s="size-[23px]" /></div>
      ) : (
        <>
          <Box on={r.on} />
          <div className="ml-1.5 flex h-6 w-[28px] shrink-0 items-center">
            {r.sw && <Swatch c={r.sw} />}
            {r.k === "poly" && <Icon n="poly" />}
            {r.k === "line" && <div className={`h-0.5 w-[22px] ${r.line}`} />}
            {r.k === "dot" && <div className="flex w-[23px] justify-center pb-0.5"><div className={`rounded-full border border-[#333] ${r.dot}`} /></div>}
            {r.k === "osm" && (
              <div className="ml-[3px] grid size-[20px] grid-cols-3 grid-rows-3">
                {["bg-[#2a3a50]", "bg-[#a9c3e3]", "bg-[#2a3a50]", "bg-[#c4d6ec]", "bg-[#2a3a50]", "bg-[#a9c3e3]", "bg-[#2a3a50]", "bg-[#a9c3e3]", "bg-white"].map((c, i) => <div key={i} className={c} />)}
              </div>
            )}
          </div>
        </>
      )}
      <div className={`min-w-0 flex-1 truncate pt-0.5 leading-[27px] ${r.tr || ""} ${active ? "text-black" : "text-[#828282] italic"} ${r.u ? "underline decoration-2 underline-offset-2" : ""} ${r.k === "poly" || r.k === "dot" || r.k === "osm" ? "pl-0.5" : ""} ${r.ar ? "text-[18px]" : "font-bold"}`}>{r.t}</div>
      {r.ind && <div className="mr-[9px] flex size-6 shrink-0 items-center justify-center rounded-[3px] border border-[#e0e0e0] bg-[#f6f6f6]"><Icon n={r.ind} s="size-[22px]" /></div>}
    </div>
  );
}

const DockButtons = () => (
  <div className="flex gap-1 pb-[3px]">
    <svg viewBox="0 0 12 12" className="size-[11px]" fill="none" stroke="#555"><rect x=".5" y=".5" width="11" height="11" rx="2" /><path d="M5 3H9V7H5ZM3 5.5V9H7V7" /></svg>
    <svg viewBox="0 0 12 12" className="size-[11px]" fill="none" stroke="#555"><rect x=".5" y=".5" width="11" height="11" rx="2" /><path d="M3 3L9 9M9 3L3 9" strokeWidth="2" /></svg>
  </div>
);

function LayersPanel() {
  return (
    <section className="flex w-[432px] shrink-0 flex-col">
      <div className="flex h-[25px] shrink-0 items-center justify-between pr-[2px] pl-1"><N k="scale-x-95">Layers</N><DockButtons /></div>
      <div className="flex h-[32px] shrink-0 items-center pb-[3px]">
        <div className="ml-1.5 flex size-[23px] items-center justify-center rounded-[3px] border border-[#a6a6a6] bg-[#dcdcdc]"><Icon n="brush" s="size-4" /></div>
        <div className="ml-[6px]"><Icon n="addgroup" s="size-4" /></div>
        <div className="ml-[9px]"><Icon n="eye" s="size-[17px]" /></div>
        <div className="ml-2"><Icon n="filter" s="size-[15px]" /></div>
        <div className="ml-[11px]"><Icon n="epsfilter" s="size-4" /></div>
        <div className="ml-1.5"><Down c="text-[#999]" /></div>
        <div className="ml-2.5"><Icon n="expand" s="size-[15px]" /></div>
        <div className="ml-2.5"><Icon n="collapse" s="size-[15px]" /></div>
        <div className="ml-[9px]"><Icon n="remove" s="size-[15px]" /></div>
      </div>
      <div className="flex-1 border border-[#b4b4b4] bg-white">{LAYERS.map((r, i) => <LayerRow key={i} r={r} />)}</div>
    </section>
  );
}

const FILLS = ["#f7fbff", "#c8dcf0", "#73b2d8", "#2879b9", "#08306b"];
const GRID = [
  [1, 2, 0, 0, 1, 0, 0],
  [2, 1, 0, 2, 2, 0, 0],
  [1, 3, 2, 0, 0, 0, 0],
  [3, 4, 3, 3, 1, 0, 0],
  [2, 1, 4, 3, 0, 0, 0],
  [0, 0, 0, 0, 0, 0, 0],
];
const RIVERS_N = "M592 137L610 146Q622 160 616 184M616 140Q628 142 634 158L641 176L632 191M610 172Q600 210 572 227M531 187L551 234L558 237M152 438L205 420L282 407M89 570Q92 610 103 644M104 720L111 750L104 793L95 837M418 763L406 778L405 798M1330 437L1341 463Q1365 468 1375 487Q1385 512 1402 513Q1420 530 1432 560M1489 388L1495 417L1487 440Q1494 465 1475 476Q1474 510 1466 522Q1446 526 1447 537Q1450 550 1458 550L1460 562M442 1024Q460 1029 488 1064Q496 1072 501 1054Q510 1049 542 1062Q552 1062 557 1047L590 1036Q606 1036 610 1051Q628 1074 635 1075L655 1070Q664 1076 662 1086Q668 1100 680 1082Q700 1078 706 1084Q710 1092 709 1107Q730 1113 760 1108Q790 1112 806 1145Q820 1152 860 1148";
const RIVERS_S = "M806 36Q820 42 860 38Q874 48 890 84Q896 90 932 91Q940 98 942 113Q954 118 963 106Q970 124 979 108Q1000 120 1010 106Q1022 88 1034 90Q1044 94 1054 100L1083 97L1125 117Q1136 136 1146 128Q1156 118 1168 128Q1176 140 1222 150Q1232 165 1240 169L1280 176Q1300 190 1365 203Q1378 190 1384 181Q1398 176 1410 154L1454 159M282 93Q289 120 286 151M298 155Q318 154 325 166Q336 180 340 194L352 196V216L373 221M312 296L317 308Q350 314 352 321L363 379L356 400L348 430M378 582L356 625L328 625M329 636Q326 660 334 683M341 694L408 674L426 677Q436 666 453 658M442 224Q460 215 466 205Q468 190 467 172Q478 160 474 146Q484 136 482 122Q480 100 484 95L498 92L500 84M484 112L509 97M484 120L500 115H512M476 144Q500 130 506 149M482 146Q494 142 507 158M450 218L492 191Q508 186 513 197Q496 220 506 226Q520 236 532 214Q545 202 548 214Q536 230 548 234Q560 238 570 228Q580 234 582 246L592 243Q594 228 610 232Q622 242 625 232Q622 224 611 220L621 205M884 558L898 552Q894 540 900 533Q914 524 914 506Q932 516 956 502Q964 502 963 518Q970 530 962 545Q976 548 990 559Q994 550 992 530Q1002 520 1007 513Q1014 522 1026 533Q1044 536 1054 544Q1060 562 1076 564Q1092 576 1098 571Q1106 560 1106 550Q1116 542 1126 546Q1140 554 1139 568Q1146 580 1160 582M763 650Q776 662 788 672Q796 690 812 698Q822 716 838 704Q850 706 844 719Q856 728 866 732L882 761M868 734L888 752M1014 740Q1014 726 1030 726Q1052 722 1052 710Q1056 690 1070 690Q1084 704 1096 697Q1090 682 1090 676Q1096 660 1102 660Q1120 668 1126 686M1244 651L1254 644Q1266 622 1274 620L1296 622Q1304 610 1294 607Q1276 606 1276 600Q1286 592 1282 584L1274 581M1461 112V115";

function MapCanvas() {
  const X = 21.3, Y = 34.5, W = 122.06, H = 122;
  return (
    <div className="mt-px w-[899px] shrink-0 border border-[#b4b4b4] bg-white">
      <svg viewBox="0 -1 897 803" className="h-[803px] w-[897px]" fill="none">
        {GRID.map((row, j) => row.map((v, i) => (
          <rect key={`${i}-${j}`} x={X + i * W} y={Y + j * H} width={W} height={H} fill={FILLS[v]} stroke="#232323" strokeWidth="1.6" />
        )))}
        <g stroke="#2fdfe4" strokeWidth="1.6" strokeLinejoin="round" strokeLinecap="round">
          <path transform="translate(-2 15.2) scale(.35714 .33333)" vectorEffect="non-scaling-stroke" d={RIVERS_N} />
          <path transform="translate(-2 385.2) scale(.35714 .33333)" vectorEffect="non-scaling-stroke" d={RIVERS_S} />
          <path d="M581 244.5L583 244" />
        </g>
        <g fontFamily="Open Sans, sans-serif" fontSize="10" textAnchor="middle" fill="#050505">
          {GRID.map((row, j) => row.map((_, i) => (
            <text key={`${i}-${j}`} x={X + (i + 0.5) * W} y={Y + (j + 0.5) * H + 3.3}>{i * 6 + j + 1}</text>
          )))}
        </g>
      </svg>
    </div>
  );
}

const BTN = "flex items-center justify-center rounded-[3px] border border-[#adadad] bg-linear-to-b from-[#fefefe] to-[#efefef]";
const FIELD = "flex items-center rounded-[3px] border border-[#adadad] bg-white";

const Spin = ({ w, children, cls = "" }) => (
  <div className={`flex h-[27px] shrink-0 overflow-hidden rounded-[3px] border border-[#adadad] bg-white ${w} ${cls}`}>
    <div className="flex min-w-0 flex-1 items-center pl-1">{children}</div>
    <div className="flex w-[22px] shrink-0 flex-col items-center justify-center gap-[5px] border-l border-[#adadad] bg-[#f7f7f7]">
      <svg viewBox="0 0 12 7" className="h-[7px] w-3"><path d="M0 7H12L6 0Z" fill="#555" /></svg>
      <svg viewBox="0 0 12 7" className="h-[7px] w-3"><path d="M0 0H12L6 7Z" fill="#555" /></svg>
    </div>
  </div>
);

const ROWS = [
  ["0.000000 - 0.000000", "0 - 0", "bg-[#f7fbff]"],
  ["0.000000 - 2602.310278", "0 - 2602", "bg-[#c8dcf0]"],
  ["2602.310278 - 6965.273820", "2602 - 6965", "bg-[#73b2d8]"],
  ["6965.273820 - 11598.660259", "6965 - 11599", "bg-[#2879b9]"],
  ["11598.660259 - 20040.631642", "11599 - 20041", "bg-[#08306b]"],
];

function StylingPanel() {
  return (
    <section className="flex min-w-0 flex-1 flex-col">
      <div className="flex h-[25px] shrink-0 items-center justify-between pr-0.5 pl-[13px]"><N k="scale-x-[.98]">Layer Styling</N><DockButtons /></div>
      <div className={`${BTN} ml-3 mr-[3px] h-8 shrink-0 justify-between! pr-[10px] pl-[5px]`}>
        <div className="flex items-center gap-[3px]"><div className="-mt-1"><Icon n="poly" /></div><N k="scale-x-[.885]">waterways_lineLength</N></div><Down />
      </div>
      <div className="mt-[9px] ml-3 flex h-[700px] shrink-0">
        <div className="flex w-[38px] shrink-0 flex-col">
          <div className="flex h-8 items-center justify-center pr-0.5"><Icon n="brush2" s="size-[22px]" /></div>
          <div className="flex flex-1 flex-col items-center gap-2 bg-[#5e5e5e] pt-1 pr-1.5">
            <div className="h-6 pt-1"><svg viewBox="0 0 24 16" className="h-4 w-6"><Tag y={2} /></svg></div>
            <Icon n="cloud" /><Icon n="cube" /><Icon n="tree" /><Icon n="history" />
          </div>
        </div>
        <div className="ml-[3px] flex w-[524px] flex-col">
          <div className={`${BTN} h-8 shrink-0 justify-between! pr-[10px] pl-[6px]`}>
            <div className="flex items-center gap-[3px]"><Icon n="graduated" s="size-[22px]" /><N k="scale-x-[.875]">Graduated</N></div><Down />
          </div>
          <div className="mt-[9px] flex h-8 shrink-0 items-center">
            <div className="w-28 pt-px"><N k="scale-x-[.9]">Value</N></div>
            <div className={`${FIELD} h-8 w-[371px] overflow-hidden`}>
              <span className="pb-0.5 pl-[3px] text-[14px] font-bold text-[#5a5a5a]">1.2</span><div className="flex-1 pt-px pl-[7px]"><N k="scale-x-[.885]">waterwaysL</N></div>
              <div className="flex h-full w-[30px] items-center justify-center bg-[#f5f5f5]"><Down /></div>
            </div>
            <div className={`${BTN} ml-[9px] h-8 w-8`}><Icon n="epsilon" s="size-[20px]" /></div>
          </div>
          <div className="mt-[9px] flex h-[39px] shrink-0 items-center">
            <div className="w-28"><N k="scale-x-[.89]">Symbol</N></div>
            <div className={`${BTN} h-full w-[393px] px-1`}><div className="h-[33px] w-full border border-[#2f3f2f] bg-[#729b6f]" /></div>
            <div className={`${BTN} ml-0.5 h-full w-[17px]`}><Down /></div>
          </div>
          <div className="mt-2.5 flex h-[27px] shrink-0 items-center">
            <div className="w-28 pt-px"><N k="scale-x-[.89]">Legend format</N></div>
            <div className={`${FIELD} h-[27px] w-[208px] shrink-0 pl-[3px]`}><N k="scale-x-100">%1 - %2</N></div>
            <Spin w="w-[117px]" cls="ml-[9px]"><N k="scale-x-[.92]" c="pt-px">Precision 4</N></Spin>
            <div className="ml-[9px]"><Box on /></div><div className="ml-2"><N k="scale-x-95">Trim</N></div>
          </div>
          <div className="mt-[11px] flex h-7 shrink-0 items-center">
            <div className="w-28 pt-px"><N>Color ramp</N></div>
            <div className={`${BTN} h-full w-[393px] px-1`}><div className="h-[22px] w-full bg-[linear-gradient(to_right,#f7fbff,#deebf7_13%,#c6dbef_26%,#9ecae1_39%,#6baed6_52%,#4292c6_65%,#2171b5_78%,#08519c_90%,#08306b)]" /></div>
            <div className={`${BTN} ml-0.5 h-full w-[17px]`}><Down /></div>
          </div>
          <div className="mt-[9px] flex h-[35px] shrink-0 items-end">
            <div className="flex h-[35px] w-[88px] items-center justify-center rounded-t-[3px] border border-b-0 border-[#adadad] bg-white pt-px"><N mid k="scale-x-[.88]">Classes</N></div>
            <div className="flex h-[33px] w-[108px] items-center justify-center rounded-tr-[3px] border border-l-0 border-[#bdbdbd] bg-[#e8e8e8] pt-0.5"><N mid k="scale-x-[.88]">Histogram</N></div>
            <div className="h-px flex-1 bg-[#bdbdbd]" />
          </div>
          <div className="mt-[15px] flex h-60 shrink-0 flex-col border border-[#b4b4b4] bg-white">
            <div className="flex h-[31px] shrink-0 items-center border-b border-[#b4b4b4] bg-linear-to-b from-[#fdfdfd] to-[#ececec]">
              <div className="flex h-full w-[103px] items-center justify-between border-r border-[#c6c6c6] pr-[7px] pl-[3px]"><span className="pt-[3px]">Symbol</span><div className="mb-1.5"><Down /></div></div>
              <div className="flex h-full w-[251px] items-center border-r border-[#c6c6c6] pt-[3px] pl-[3px]">Values</div>
              <div className="pt-[3px] pl-[3px]">Legend</div>
            </div>
            <div className="flex flex-col">
              {ROWS.map(([v, l, c]) => (
                <div key={v} className="flex h-[25px] items-center pt-px text-[17.4px]">
                  <div className="flex w-[106px] items-center gap-[7px] pb-px pl-[3px]"><Box on small /><Swatch c={c} s="size-5" /></div>
                  <div className="w-[251px] whitespace-nowrap">{v}</div><div className="whitespace-nowrap">{l}</div>
                </div>
              ))}
            </div>
          </div>
          <div className="mt-[9px] flex h-8 shrink-0 items-center">
            <div className="w-[47px] shrink-0 pt-px"><N k="scale-x-[.86]">Mode</N></div>
            <div className={`${BTN} h-8 w-[226px] shrink-0 justify-start! pl-[5px]`}><Icon n="jenks" /><div className="w-[172px] pt-px pl-[3px]"><N k="scale-x-[.91]">Natural Breaks (Jenks)</N></div><div className="ml-0.5"><Down /></div></div>
            <div className="mr-2.5 ml-auto pt-px"><N end k="scale-x-[.88]">Classes</N></div>
            <Spin w="w-[82px]"><N>5</N></Spin>
          </div>
          <div className="mt-[9px] flex h-[33px] shrink-0 items-center">
            <div className={`${BTN} h-[30px] w-20`}><N mid>Classify</N></div>
            <div className={`${BTN} ml-[9px] h-[33px] w-[39px]`}><Icon n="plus" s="size-[22px]" /></div>
            <div className={`${BTN} ml-[9px] h-[33px] w-[39px]`}><Icon n="minus" s="size-[22px]" /></div>
            <div className={`${BTN} ml-[9px] h-[30px] w-20`}><N mid k="scale-x-[.92]">Delete All</N></div>
            <div className={`${BTN} ml-auto h-[30px] w-[98px] justify-end! pr-1`}><N end k="scale-x-[.88]" c="mr-[7px]">Advanced</N><Down /></div>
          </div>
          <div className="mt-[11px] flex h-[21px] shrink-0 items-center gap-2"><Box on /><N k="scale-x-[.885]">Link class boundaries</N></div>
          <div className="mt-6 flex h-[22px] shrink-0 items-center font-bold">
            <svg viewBox="0 0 8 12" className="mr-[10px] ml-[5px] h-3 w-[7px]"><path d="M0 0L8 6L0 12Z" fill="#333" /></svg><N k="scale-x-[.965]">Layer Rendering</N>
          </div>
          <div className="mt-3 flex h-[31px] shrink-0 items-center">
            <div className={`${BTN} h-[31px] w-8`}><Icon n="undoO" s="size-[18px]" /></div>
            <div className={`${BTN} ml-1.5 h-[31px] w-8`}><Icon n="redoG" s="size-[18px]" /></div>
            <div className="mr-2 ml-auto"><Box on /></div><div className="w-[81px]"><N k="scale-x-[.89]">Live update</N></div>
            <div className={`${BTN} ml-3 h-[30px] w-20`}><N mid k="scale-x-[.93]">Apply</N></div>
          </div>
        </div>
      </div>
      <div className="mt-1 ml-[9px] flex h-[35px] shrink-0">
        <div className="mt-px flex h-8 w-[188px] items-center justify-center rounded-bl-[3px] border border-t-0 border-[#bdbdbd] bg-[#dcdcdc]"><N mid k="scale-x-[.92]">Topology Checker ...</N></div>
        <div className="mt-px flex h-8 w-[156px] items-center justify-center border border-t-0 border-l-0 border-[#bdbdbd] bg-[#dcdcdc]"><N mid k="scale-x-[.92]">Processing To...</N></div>
        <div className="flex h-[35px] w-[108px] items-center justify-center rounded-b-[3px] border border-t-0 border-l-0 border-[#b0b0b0] bg-[#f8f8f8]"><N mid k="scale-x-[.92]" c="pt-px">Layer St...</N></div>
        <div className="mt-px flex h-8 flex-1 items-center justify-center border border-t-0 border-l-0 border-[#bdbdbd] bg-[#dcdcdc]"><N mid k="scale-x-[.92]">Results Vi...</N></div>
      </div>
    </section>
  );
}

function StatusBar() {
  return (
    <footer className="flex h-9 shrink-0 items-center">
      <div className={`${FIELD} ml-1 h-[27px] w-[291px] shrink-0 pl-2 text-[#808080]`}><Icon n="search" s="size-3.5" /><div className="pt-px pl-[7px]"><N k="scale-x-100">Type to locate (Ctrl+K)</N></div></div>
      <div className="ml-[558px] w-[80px] shrink-0 pt-px"><N k="scale-x-[.88]">Coordinate</N></div>
      <div className={`${FIELD} h-[27px] w-32 shrink-0 justify-center pt-px`}><N mid k="scale-x-[.93]">634400,771263</N></div>
      <div className="ml-[5px] w-9 shrink-0 pb-0.5"><Icon n="mouse" s="size-[23px]" /></div>
      <div className="w-[39px] shrink-0 pt-px"><N k="scale-x-[.87]">Scale</N></div>
      <div className={`${FIELD} h-[27px] w-[114px] shrink-0 overflow-hidden pl-1`}><div className="flex-1 pt-px"><N k="scale-x-[.95]">1:464541</N></div><div className="flex h-full w-[29px] items-center justify-center bg-[#f5f5f5]"><Down /></div></div>
      <div className="ml-[11px] w-[30px] shrink-0"><Icon n="lock" s="size-[22px]" /></div>
      <div className="w-[68px] shrink-0 pt-px"><N k="scale-x-[.86]">Magnifier</N></div>
      <Spin w="w-[105px]"><N k="scale-x-[.95]" c="pt-px">100%</N></Spin>
      <div className="ml-[9px] w-[68px] shrink-0 pt-px"><N k="scale-x-[.885]">Rotation</N></div>
      <Spin w="w-[101px]"><N k="scale-x-[.95]" c="pt-px">0.0 °</N></Spin>
      <div className="ml-1.5"><Box on /></div><div className="ml-2 w-[67px] shrink-0 pt-px"><N k="scale-x-[.88]">Render</N></div>
      <div className="w-7"><Icon n="globe" s="h-[21px] w-6" /></div>
      <div className="w-28 shrink-0 pt-px"><N k="scale-x-[.945]">EPSG:22992</N></div>
      <Icon n="chat" />
    </footer>
  );
}

export default function App() {
  return (
    <div className="flex h-[1038px] w-[1920px] flex-col overflow-hidden bg-[#efefef] font-['Open_Sans','Noto_Sans','DejaVu_Sans',sans-serif] text-[17px] leading-6 text-black">
      <header className="flex h-[34px] shrink-0 items-center bg-white">
        <svg viewBox="0 0 24 24" className="ml-0.5 size-6" fill="none">
          <path d="M12 .5A11.5 11.2 0 1 0 17 22L13 17.6A6 6 0 1 1 18 12.8L22.5 17A11.5 11.2 0 0 0 12 .5Z" fill="#5f9f2c" />
          <path d="M12 13L15.5 12L23.8 20V23.8H18.5L12.5 17Z" fill="#7fb83a" /><path d="M9.5 8.5H13.5L17 12.5V15.5H14L9.5 11.5Z" fill="#e88a2a" />
        </svg>
        <span className="ml-[5px] pt-px tracking-[.12px]">*fb_GIS_proj8 — QGIS</span>
        <div className="ml-auto flex items-center pr-[29px]">
          <svg viewBox="0 0 16 16" className="size-4" stroke="#111"><path d="M.5 7.5H15.5" /></svg>
          <svg viewBox="0 0 16 16" className="ml-[53px] size-4" stroke="#111" fill="none"><path d="M.5 3.5H12.5V15.5H.5ZM3.5 3.5V.5H15.5V12.5H12.5" /></svg>
          <svg viewBox="0 0 16 16" className="ml-[55px] size-4" stroke="#111"><path d="M.5 .5L15.5 15.5M15.5 .5L.5 15.5" strokeWidth="1.2" /></svg>
        </div>
      </header>
      <nav className="flex h-[30px] shrink-0 items-center border-b border-[#d2d2d2] pt-0.5 pl-[13px]">
        {MENU.map(([a, b, c, w]) => <div key={a + b + c} className={`shrink-0 ${w}`}>{a}<span className="underline underline-offset-[3px]">{b}</span>{c}</div>)}
      </nav>
      <Toolbar items="s0 new open save layout layoutmgr style H hand panto zoomin zoomout zoomfull zoomsel zoomlayer zoomnative zoomlast zoomnext mapview view3d bookmark bookmarks clock refresh h identify table abacus gear sigma measure v tips action vg textann v" />
      <Toolbar items="s0 addlayer geopkg newshp feather memory | virtual | J pencils pencil saveedit addpoly vertex v16 modify delete cut copy paste undo redo h abc diagram | abpinblue abcred | abpin abceye abcmove abcrot abcedit h metasearch h python h help h topo sheet" />
      <Toolbar items="s0 select v form v deselect v selloc H green osm" />
      <main className="-mt-px flex h-[806px] shrink-0">
        <LayersPanel />
        <div className="flex w-[9px] shrink-0 items-center justify-center"><div className="h-4 w-0 border-l border-dotted border-[#aaa]" /></div>
        <MapCanvas />
        <StylingPanel />
      </main>
      <StatusBar />
      <div className="flex h-1 shrink-0 bg-[#1b1b22]"><div className="ml-[335px] h-1 w-12 bg-[#4b4b50]" /><div className="ml-0.5 h-1 w-1 bg-[#3a3a40]" /></div>
    </div>
  );
}
